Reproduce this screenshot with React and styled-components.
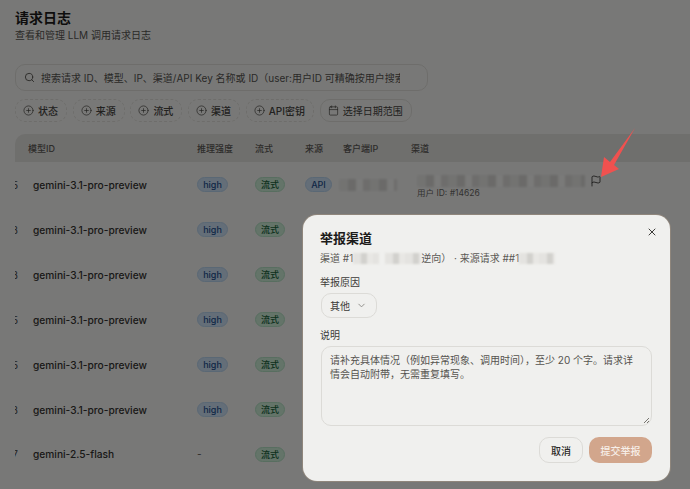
import React from "react";
import styled, { createGlobalStyle } from "styled-components";
import { Search, CirclePlus, Calendar, X, ChevronDown, Flag } from "lucide-react";

const Global = createGlobalStyle`
  html, body { margin: 0; padding: 0; background: #f1f1ef; }
  * { box-sizing: border-box; }
  body { font-family: Inter, "Noto Sans CJK SC", sans-serif; }
`;
const Page = styled.div`
  position: relative; width: 690px; height: 489px; overflow: hidden;
  background: #f1f1ef; color: #2b2a28; padding: 9px 0 0 15px;
`;
const Title = styled.h1`margin: 0; font-size: 14px; line-height: 17px; font-weight: 700; color: #1c1b1a;`;
const Subtitle = styled.p`margin: 2px 0 0; font-size: 10px; line-height: 14px; color: #55534f;`;
const SearchBox = styled.div`
  margin-top: 22px; width: 413px; height: 27px; border: 1px solid #dcdbd6; border-radius: 10px;
  display: flex; align-items: center; gap: 6px; padding: 0 8px; color: #55534f; overflow: hidden;
`;
const SearchText = styled.span`font-size: 10px; white-space: nowrap; overflow: hidden; width: 359px;`;
const Filters = styled.div`display: flex; gap: 5.7px; margin-top: 8px; height: 23px;`;
const Chip = styled.div`
  display: flex; align-items: center; gap: 4px; padding: 0 8px 0 7px; font-size: 10px; color: #45433f;
  border: 1px ${p => (p.$solid ? "solid" : "dashed")} #dcdbd6; border-radius: 10px; white-space: nowrap;
  font-weight: ${p => (p.$solid ? 400 : 500)};
`;
const TableHead = styled.div`
  margin-top: 12px; height: 28px; background: #dfdedb; border-radius: 10px 0 0 0; display: grid;
  grid-template-columns: 169px 58px 50px 38px 68px 1fr; padding-left: 13px; align-items: center;
  font-size: 9px; font-weight: 500; color: #5b5955;
`;
const Rows = styled.div`display: flex; flex-direction: column;`;
const Row = styled.div`
  height: 45px; display: grid; grid-template-columns: 18px 164px 58px 50px 38px 74px 1fr; align-items: center;
  &:last-child { height: 44px; }
`;
const Clipped = styled.div`font-size: 10px; overflow: hidden; width: 3px; color: #45433f; direction: rtl;`;
const Model = styled.div`font-size: 10.2px; font-weight: 500; color: #33322e;`;
const Cell = styled.div`display: flex; align-items: center;`;
const Pill = styled.span`
  display: inline-flex; align-items: center; justify-content: center; height: 15px; width: ${p => p.$w}px; border-radius: 8px;
  font-size: 9px; font-weight: 500; color: ${p => p.$fg}; background: ${p => p.$bg}; border: 1px solid ${p => p.$line};
`;
const Dash = styled.span`font-size: 10px; color: #55534f;`;
const Blur = styled.div`
  height: ${p => p.$h}px; width: ${p => p.$w}px; margin-left: ${p => p.$ml || 0}px;
  background: repeating-linear-gradient(90deg, #e6e6e3 0 9px, #d6d5d2 9px 17px, #f4f4f2 17px 24px, #dcdbd8 24px 31px);
  filter: blur(1.2px);
`;
const Channel = styled.div`display: flex; flex-direction: column; gap: 0; margin-top: 3px;`;
const ChannelTop = styled.div`display: flex; align-items: center; gap: 5px; color: #1c1b1a; height: 13px;`;
const UserId = styled.div`font-size: 8.5px; line-height: 10px; color: #66645f;`;
const Overlay = styled.div`position: absolute; inset: 0; background: rgba(0,0,0,.5);`;
const Arrow = styled.svg`position: absolute; left: 596px; top: 124px; width: 44px; height: 58px;`;
const Modal = styled.div`
  position: absolute; left: 303px; top: 215px; width: 367px; height: 266px; background: #f0f0ee;
  border-radius: 14px; padding: 14px 18px 0 17px; display: flex; flex-direction: column;
  box-shadow: 0 0 0 1px #8f867c;
`;
const Close = styled.div`position: absolute; top: 11px; right: 12px; color: #3c3b38; display: flex;`;
const ModalTitle = styled.h2`margin: 0; font-size: 13px; line-height: 19px; font-weight: 700; color: #1c1b1a;`;
const Meta = styled.div`display: flex; align-items: center; font-size: 10px; line-height: 16px; color: #5b5955; margin-top: 2px; white-space: pre;`;
const MetaBlur = styled.span`
  display: inline-block; height: 11px; width: ${p => p.$w}px; margin: 0 ${p => p.$m || 0}px 0 0;
  background: repeating-linear-gradient(90deg, #e4e3e0 0 8px, #d2d1cd 8px 14px, #e8e7e4 14px 20px); filter: blur(1px);
`;
const Label = styled.div`font-size: 10px; line-height: 16px; color: #3c3b38; margin-top: ${p => p.$mt}px;`;
const Select = styled.div`
  margin: 3px 0 0 1px; width: 56px; height: 25px; border: 1px solid #dcdbd7; border-radius: 10px; display: flex; align-items: center;
  gap: 6px; padding: 0 8px; font-size: 10px; color: #3c3b38; white-space: nowrap;
`;
const Area = styled.div`
  position: relative; margin: 3px 0 0 1px; width: 331px; height: 80px; border: 1px solid #dcdbd7; border-radius: 10px; padding: 6px 8px;
  font-size: 10px; line-height: 14px; color: #55534f;
`;
const Grip = styled.svg`position: absolute; right: 1px; bottom: 1px; width: 8px; height: 8px;`;
const Actions = styled.div`display: flex; justify-content: flex-end; gap: 6px; margin-top: 11px;`;
const Button = styled.div`
  height: 26px; border-radius: 10px; display: flex; align-items: center; justify-content: center; width: ${p => p.$w}px;
  font-size: 10px; font-weight: 500;
  color: ${p => (p.$primary ? "#f7efe9" : "#2b2a28")}; background: ${p => (p.$primary ? "#d2a68c" : "transparent")};
  border: ${p => (p.$primary ? "none" : "1px solid #dcdbd7")};
`;

const rows = [
  ["5", "gemini-3.1-pro-preview", true, true],
  ["8", "gemini-3.1-pro-preview", true],
  ["3", "gemini-3.1-pro-preview", true],
  ["5", "gemini-3.1-pro-preview", true],
  ["5", "gemini-3.1-pro-preview", true],
  ["8", "gemini-3.1-pro-preview", true],
  ["7", "gemini-2.5-flash", false],
];
const chips = ["状态", "来源", "流式", "渠道", "API密钥"];
const blue = { $fg: "#1e4f8c", $bg: "#c8dcf0", $line: "#b5d0ea" };
const green = { $fg: "#17603a", $bg: "#c8e8d2", $line: "#b0dcc0" };

export default function App() {
  return (
    <Page>
      <Global />
      <Title>请求日志</Title>
      <Subtitle>查看和管理 LLM 调用请求日志</Subtitle>
      <SearchBox>
        <Search size={11} />
        <SearchText>搜索请求 ID、模型、IP、渠道/API Key 名称或 ID（user:用户ID 可精确按用户搜索）</SearchText>
      </SearchBox>
      <Filters>
        {chips.map(c => (
          <Chip key={c}><CirclePlus size={11} strokeWidth={1.5} />{c}</Chip>
        ))}
        <Chip $solid><Calendar size={11} strokeWidth={1.5} />选择日期范围</Chip>
      </Filters>
      <TableHead>
        <span>模型ID</span><span>推理强度</span><span>流式</span><span>来源</span><span>客户端IP</span><span>渠道</span>
      </TableHead>
      <Rows>
        {rows.map(([n, m, high, first], i) => (
          <Row key={i}>
            <Clipped>{n}</Clipped>
            <Model>{m}</Model>
            <Cell>{high ? <Pill $w={31} {...blue}>high</Pill> : <Dash>-</Dash>}</Cell>
            <Cell><Pill $w={30} {...green}>流式</Pill></Cell>
            <Cell>{first && <Pill $w={27} {...blue}>API</Pill>}</Cell>
            <Cell>{first && <Blur $ml={-4} $w={58} $h={12} />}</Cell>
            <div>
              {first && (
                <Channel>
                  <ChannelTop><Blur $w={168} $h={12} /><Flag size={12} strokeWidth={1.5} /></ChannelTop>
                  <UserId>用户 ID: #14626</UserId>
                </Channel>
              )}
            </div>
          </Row>
        ))}
      </Rows>
      <Overlay />
      <Arrow viewBox="0 0 44 58">
        <polygon points="5,53 8,33 14,38 39,4 18,41 23,45" fill="#f0514f" />
      </Arrow>
      <Modal>
        <Close><X size={12} /></Close>
        <ModalTitle>举报渠道</ModalTitle>
        <Meta>
          渠道 #1<MetaBlur $w={26} $m={6} /><MetaBlur $w={36} />逆向） · 来源请求 ##1<MetaBlur $w={36} />
        </Meta>
        <Label $mt={8}>举报原因</Label>
        <Select>其他<ChevronDown size={11} color="#8a8984" /></Select>
        <Label $mt={9}>说明</Label>
        <Area>
          请补充具体情况（例如异常现象、调用时间），至少 20 个字。请求详情会自动附带，无需重复填写。
          <Grip viewBox="0 0 8 8"><path d="M7 2 L2 7 M7 5 L5 7" stroke="#77756f" strokeWidth="1" /></Grip>
        </Area>
        <Actions>
          <Button $w={44}>取消</Button>
          <Button $w={63} $primary>提交举报</Button>
        </Actions>
      </Modal>
    </Page>
  );
}
